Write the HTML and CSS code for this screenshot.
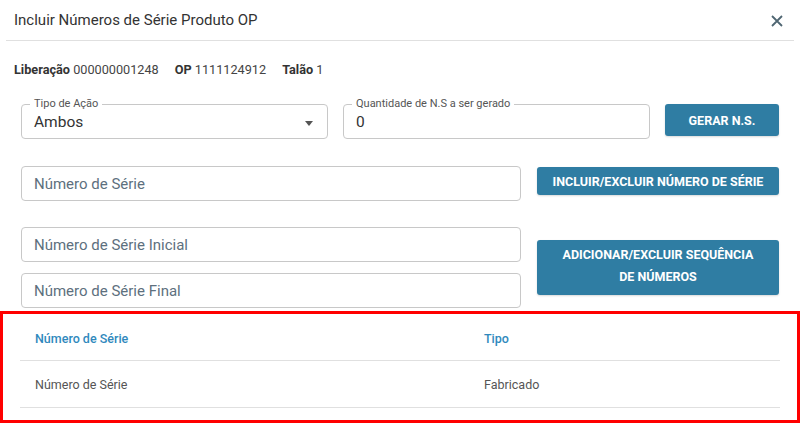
FILE: index.html
```html
<!DOCTYPE html>
<html lang="pt-BR">
<head>
    <meta charset="UTF-8">
    <meta name="viewport" content="width=device-width, initial-scale=1.0">
    <title>Incluir Números de Série Produto OP</title>

    <link rel="stylesheet" href="styles.css">
</head>
<body>
    <main class="dialog">
        <header class="dialog-header">
            <h1 class="dialog-title">Incluir Números de Série Produto OP</h1>
            <button class="close" aria-label="Fechar">
                <svg width="12" height="12" viewBox="0 0 12 12">
                    <path d="M1 1 L11 11 M11 1 L1 11" stroke="currentColor" stroke-width="1.8" fill="none"/>
                </svg>
            </button>
        </header>

        <div class="info">
            <span><b>Liberação</b> 000000001248</span>
            <span><b>OP</b> 1111124912</span>
            <span><b>Talão</b> 1</span>
        </div>

        <div class="row row-top">
            <div class="field field-half">
                <span class="field-label">Tipo de Ação</span>
                <span class="field-value">Ambos</span>
                <span class="caret"></span>
            </div>
            <div class="field field-half">
                <span class="field-label">Quantidade de N.S a ser gerado</span>
                <span class="field-value">0</span>
            </div>
            <button class="btn btn-small">Gerar N.S.</button>
        </div>

        <div class="row row-single">
            <div class="field field-wide">
                <span class="placeholder">Número de Série</span>
            </div>
            <button class="btn btn-wide">Incluir/Excluir Número de Série</button>
        </div>

        <div class="row row-range">
            <div class="stack">
                <div class="field field-wide">
                    <span class="placeholder">Número de Série Inicial</span>
                </div>
                <div class="field field-wide">
                    <span class="placeholder">Número de Série Final</span>
                </div>
            </div>
            <button class="btn btn-wide btn-tall">Adicionar/Excluir Sequência de Números</button>
        </div>

        <section class="list">
            <div class="grid grid-head">
                <div>Número de Série</div>
                <div>Tipo</div>
            </div>
            <div class="grid grid-row">
                <div>Número de Série</div>
                <div>Fabricado</div>
            </div>
        </section>
    </main>
</body>
</html>
```

FILE: styles.css
```css
* {
    box-sizing: border-box;
}
body {
    margin: 0;
    background: #fff;
    font-family: Roboto, "Liberation Sans", sans-serif;
    color: #333;
}
.dialog {
    width: 800px;
    height: 424px;
    overflow: hidden;
}
.dialog-header {
    display: flex;
    align-items: center;
    justify-content: space-between;
    height: 41px;
    margin: 0 6px;
    padding: 0 11px 0 8px;
    border-bottom: 1px solid #e0e0e0;
}
.dialog-title {
    margin: 0;
    font-size: 15px;
    font-weight: 400;
    color: #333;
}
.close {
    display: flex;
    padding: 0;
    margin-top: 2px;
    border: none;
    background: none;
    color: #4f6672;
}
.info {
    display: flex;
    gap: 16px;
    margin-top: 21px;
    padding-left: 14px;
    font-size: 12.7px;
    line-height: 16px;
    color: #444;
}
.info b {
    color: #333;
    font-weight: 700;
}
.row {
    display: flex;
    padding-left: 21px;
}
.row-top {
    margin-top: 26px;
    gap: 15px;
    align-items: flex-start;
}
.row-single {
    margin-top: 27px;
    gap: 16px;
    align-items: flex-start;
}
.row-range {
    margin-top: 26px;
    gap: 16px;
    align-items: center;
}
.field {
    position: relative;
    display: flex;
    align-items: center;
    height: 35px;
    padding: 0 12px;
    border: 1px solid #c8c8c8;
    border-radius: 4px;
    background: #fff;
}
.field-half {
    width: 307px;
}
.field-wide {
    width: 500px;
}
.field-label {
    position: absolute;
    top: -8px;
    left: 8px;
    padding: 0 4px;
    background: #fff;
    font-size: 11px;
    line-height: 14px;
    color: #555;
}
.field-value {
    font-size: 15.5px;
    color: #333;
    margin-top: 1px;
}
.placeholder {
    font-size: 15px;
    color: #5d707e;
}
.caret {
    margin-left: auto;
    margin-right: 2px;
    margin-top: 3px;
    border-left: 4px solid transparent;
    border-right: 4px solid transparent;
    border-top: 5px solid #555;
}
.stack {
    display: flex;
    flex-direction: column;
    gap: 11px;
}
.btn {
    border: none;
    border-radius: 3px;
    background: #2f7da3;
    color: #fff;
    font-family: Roboto, "Liberation Sans", sans-serif;
    font-size: 12.5px;
    font-weight: 700;
    text-transform: uppercase;
    box-shadow: 0 1px 2px rgba(0, 0, 0, 0.15);
}
.btn-small {
    width: 114px;
    height: 32px;
}
.btn-wide {
    width: 242px;
    height: 28px;
    margin-top: 1px;
}
.btn-tall {
    height: 55px;
    margin-top: 0;
    padding: 0 20px 3px;
    line-height: 22px;
}
.list {
    margin-top: 3px;
    height: 112px;
    border: 3px solid #ff0000;
    padding: 0 17px;
}
.grid {
    display: grid;
    grid-template-columns: 449px 1fr;
    border-bottom: 1px solid #e0e0e0;
    font-size: 12.5px;
}
.grid div {
    padding-left: 15px;
}
.grid-head {
    height: 47px;
    align-items: center;
    color: #3089bd;
    font-weight: 500;
    padding-top: 2px;
}
.grid-row {
    height: 47px;
    align-items: center;
    color: #555;
}
```
